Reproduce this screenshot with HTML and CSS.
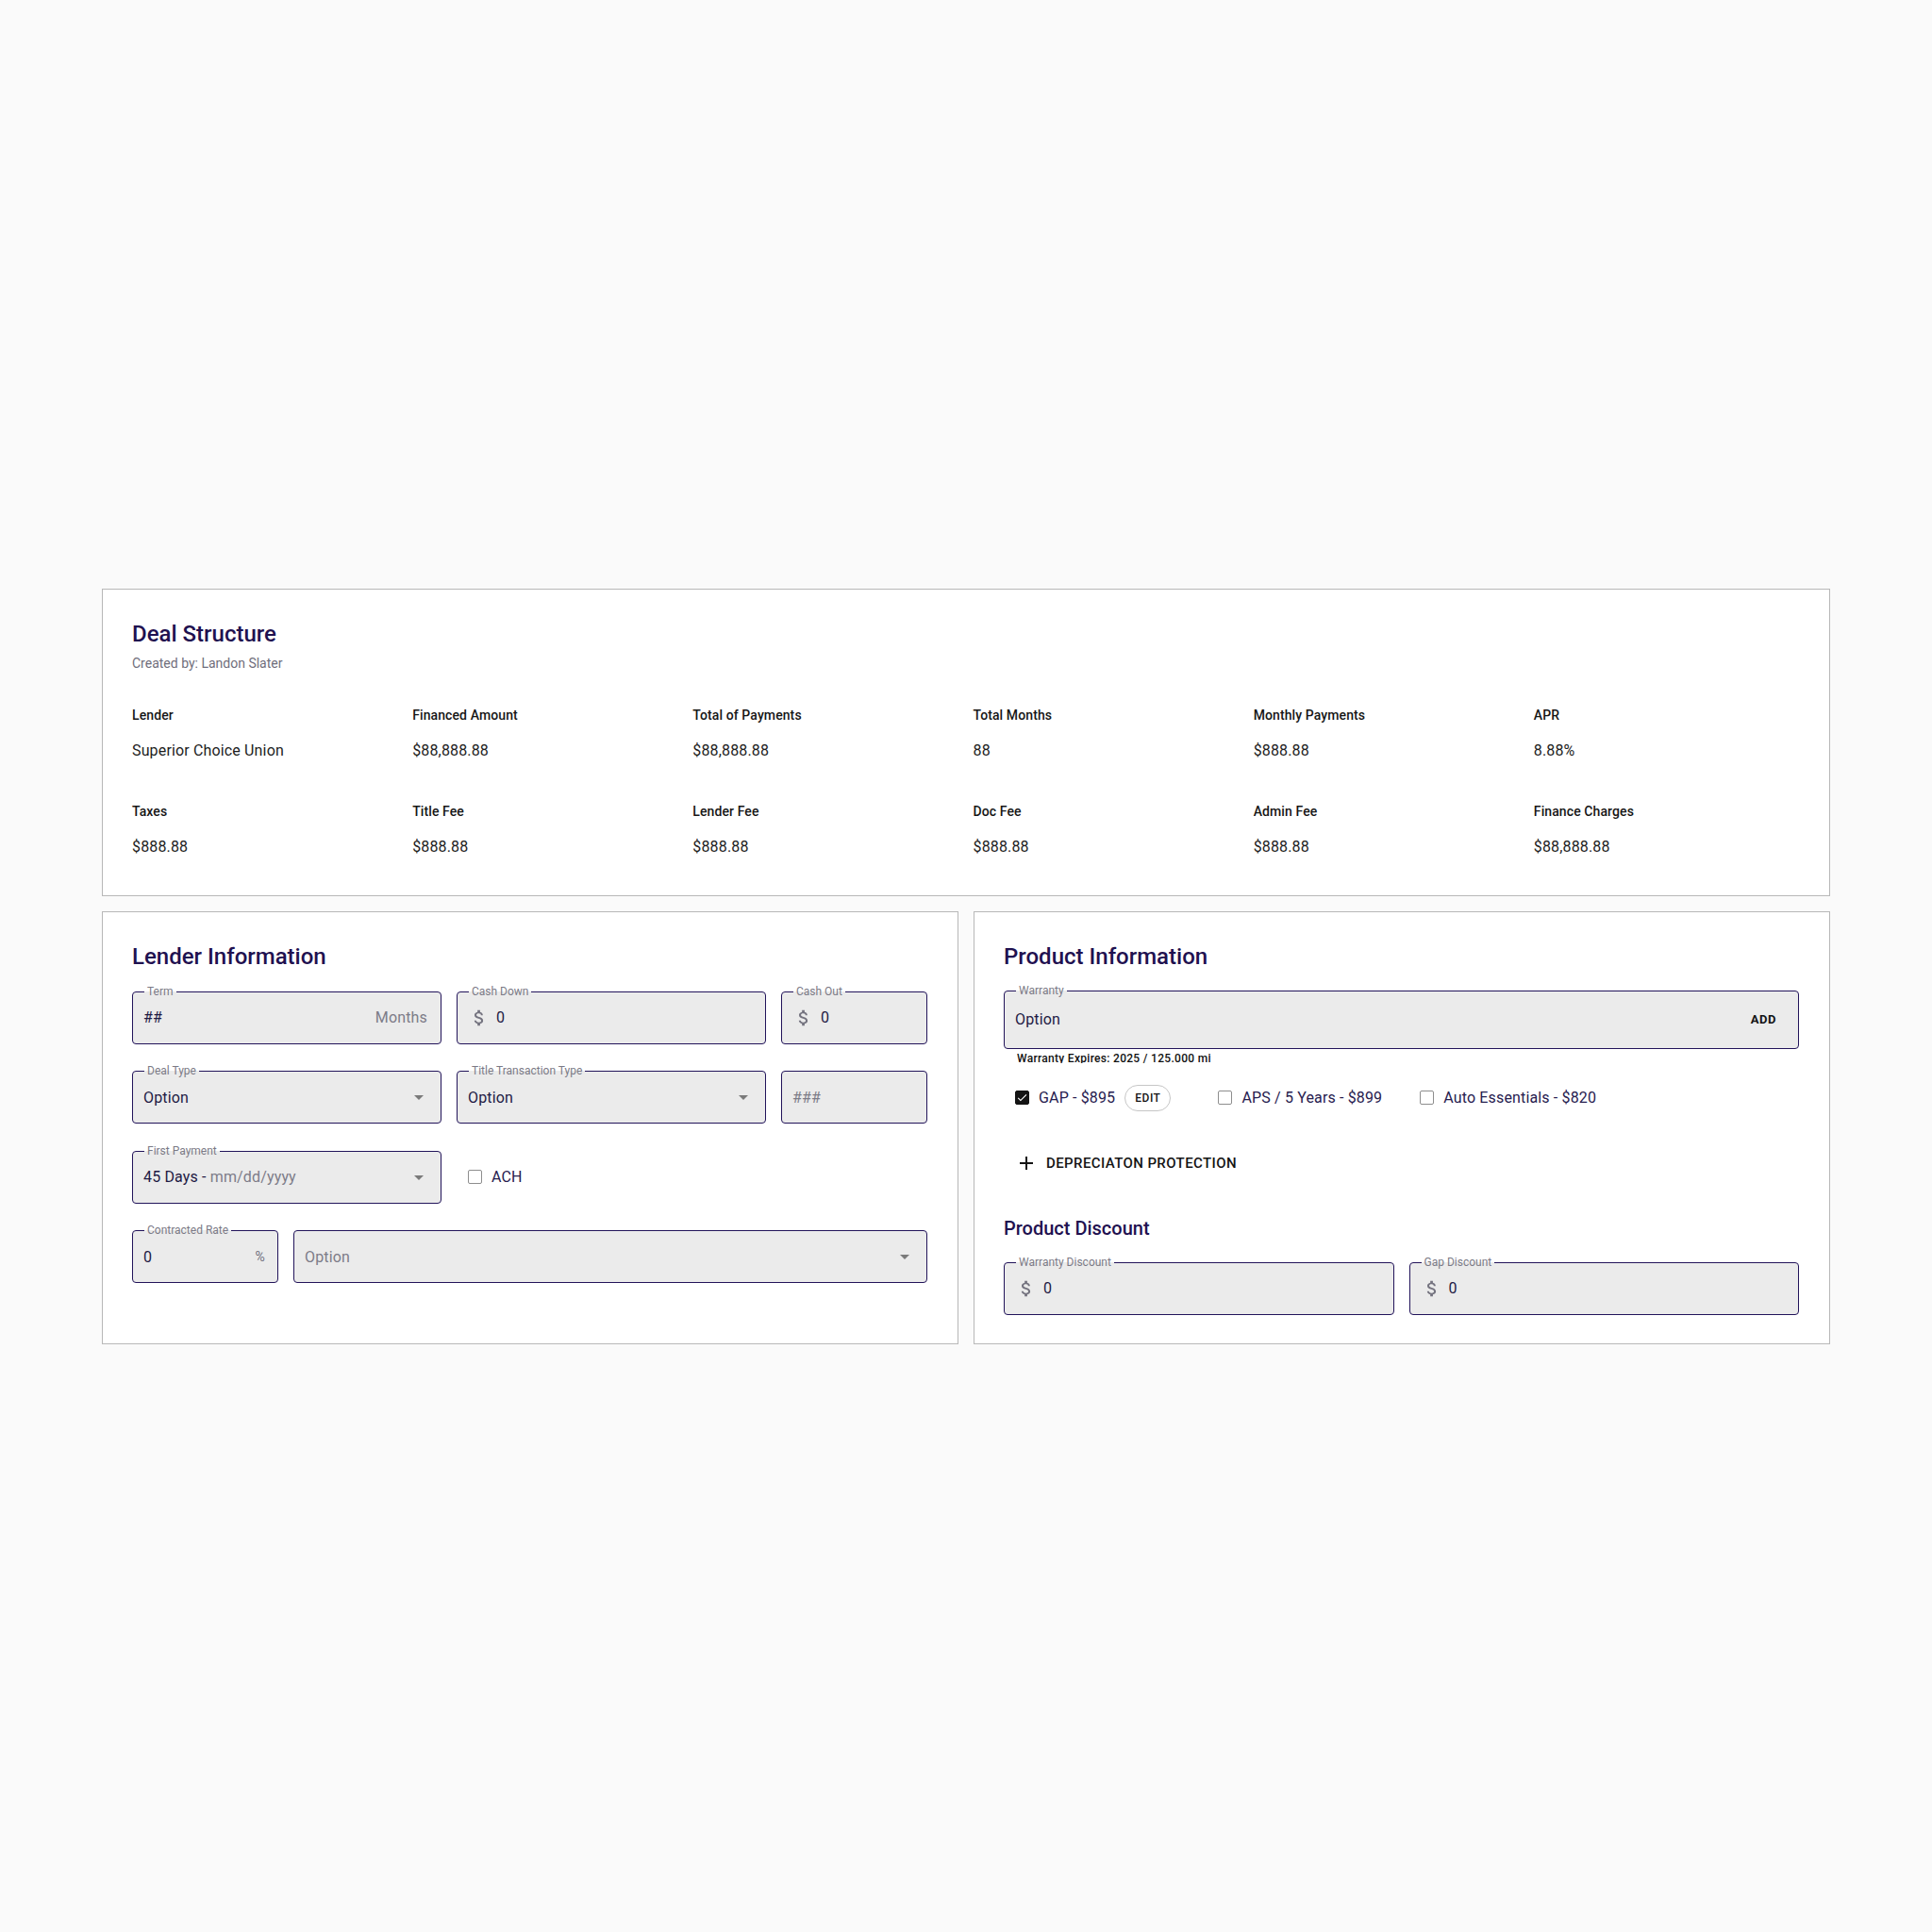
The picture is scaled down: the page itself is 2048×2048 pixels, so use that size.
FILE: index.html
```html
<!DOCTYPE html>
<html lang="en">
<head>
<meta charset="utf-8">
<title>Deal Structure</title>
<link rel="stylesheet" href="styles.css">
</head>
<body>
<main class="page">
  <section class="card deal">
    <h2 class="card-title">Deal Structure</h2>
    <p class="subtitle">Created by: Landon Slater</p>
    <dl class="summary">
      <div class="stat"><dt>Lender</dt><dd>Superior Choice Union</dd></div>
      <div class="stat"><dt>Financed Amount</dt><dd>$88,888.88</dd></div>
      <div class="stat"><dt>Total of Payments</dt><dd>$88,888.88</dd></div>
      <div class="stat"><dt>Total Months</dt><dd>88</dd></div>
      <div class="stat"><dt>Monthly Payments</dt><dd>$888.88</dd></div>
      <div class="stat"><dt>APR</dt><dd>8.88%</dd></div>
      <div class="stat"><dt>Taxes</dt><dd>$888.88</dd></div>
      <div class="stat"><dt>Title Fee</dt><dd>$888.88</dd></div>
      <div class="stat"><dt>Lender Fee</dt><dd>$888.88</dd></div>
      <div class="stat"><dt>Doc Fee</dt><dd>$888.88</dd></div>
      <div class="stat"><dt>Admin Fee</dt><dd>$888.88</dd></div>
      <div class="stat"><dt>Finance Charges</dt><dd>$88,888.88</dd></div>
    </dl>
  </section>

  <div class="cards-row">
    <section class="card lender">
      <h2 class="card-title">Lender Information</h2>
      <div class="form">
        <div class="grid-3">
          <div class="field">
            <span class="field-label">Term</span>
            <span class="value grow">##</span>
            <span class="suffix">Months</span>
          </div>
          <div class="field">
            <span class="field-label">Cash Down</span>
            <svg class="dollar" viewBox="0 0 24 24"><path d="M11.8 10.9c-2.27-.59-3-1.2-3-2.15 0-1.09 1.01-1.85 2.7-1.85 1.78 0 2.44.85 2.5 2.1h2.21c-.07-1.72-1.12-3.3-3.21-3.81V3h-3v2.16c-1.94.42-3.5 1.68-3.5 3.61 0 2.31 1.91 3.46 4.7 4.13 2.5.6 3 1.48 3 2.41 0 .69-.49 1.79-2.7 1.79-2.06 0-2.87-.92-2.98-2.1h-2.2c.12 2.19 1.76 3.42 3.68 3.83V21h3v-2.15c1.950-.37 3.5-1.5 3.5-3.55 0-2.84-2.43-3.81-4.7-4.4z"/></svg>
            <span class="value">0</span>
          </div>
          <div class="field">
            <span class="field-label">Cash Out</span>
            <svg class="dollar" viewBox="0 0 24 24"><path d="M11.8 10.9c-2.27-.59-3-1.2-3-2.15 0-1.09 1.01-1.85 2.7-1.85 1.78 0 2.44.85 2.5 2.1h2.21c-.07-1.72-1.12-3.3-3.21-3.81V3h-3v2.16c-1.94.42-3.5 1.68-3.5 3.61 0 2.31 1.91 3.46 4.7 4.13 2.5.6 3 1.48 3 2.41 0 .69-.49 1.79-2.7 1.79-2.06 0-2.87-.92-2.98-2.1h-2.2c.12 2.19 1.76 3.42 3.68 3.83V21h3v-2.15c1.95-.37 3.5-1.5 3.5-3.55 0-2.84-2.43-3.81-4.7-4.4z"/></svg>
            <span class="value">0</span>
          </div>

          <div class="field select">
            <span class="field-label">Deal Type</span>
            <span class="value grow">Option</span>
            <svg class="caret" viewBox="0 0 24 24"><path d="M7 10l5 5 5-5z"/></svg>
          </div>
          <div class="field select">
            <span class="field-label">Title Transaction Type</span>
            <span class="value grow">Option</span>
            <svg class="caret" viewBox="0 0 24 24"><path d="M7 10l5 5 5-5z"/></svg>
          </div>
          <div class="field">
            <span class="placeholder">###</span>
          </div>

          <div class="field select">
            <span class="field-label">First Payment</span>
            <span class="value grow">45 Days - <span class="muted">mm/dd/yyyy</span></span>
            <svg class="caret" viewBox="0 0 24 24"><path d="M7 10l5 5 5-5z"/></svg>
          </div>
          <label class="check ach">
            <span class="box"></span>
            <span class="check-text">ACH</span>
          </label>
        </div>

        <div class="grid-rate">
          <div class="field rate">
            <span class="field-label">Contracted Rate</span>
            <span class="value grow">0</span>
            <span class="pct">%</span>
          </div>
          <div class="field select">
            <span class="placeholder grow">Option</span>
            <svg class="caret" viewBox="0 0 24 24"><path d="M7 10l5 5 5-5z"/></svg>
          </div>
        </div>
      </div>
    </section>

    <section class="card product">
      <h2 class="card-title">Product Information</h2>
      <div class="field warranty">
        <span class="field-label">Warranty</span>
        <span class="value grow">Option</span>
        <span class="add">ADD</span>
      </div>
      <p class="helper">Warranty Expires: 2025 / 125.000 mi</p>

      <div class="products">
        <div class="product-item">
          <span class="box checked"><svg viewBox="0 0 24 24"><path d="M9 16.2 4.8 12l-1.4 1.4L9 19 21 7l-1.4-1.4L9 16.2z"/></svg></span>
          <span class="check-text">GAP - $895</span>
          <span class="chip">EDIT</span>
        </div>
        <div class="product-item">
          <span class="box"></span>
          <span class="check-text">APS / 5 Years - $899</span>
        </div>
        <div class="product-item">
          <span class="box"></span>
          <span class="check-text">Auto Essentials - $820</span>
        </div>
      </div>

      <div class="add-product">
        <svg class="plus" viewBox="0 0 24 24"><path d="M19 13h-6v6h-2v-6H5v-2h6V5h2v6h6v2z"/></svg>
        <span>DEPRECIATON PROTECTION</span>
      </div>

      <h3 class="sub-title">Product Discount</h3>
      <div class="grid-2">
        <div class="field">
          <span class="field-label">Warranty Discount</span>
          <svg class="dollar" viewBox="0 0 24 24"><path d="M11.8 10.9c-2.27-.59-3-1.2-3-2.15 0-1.09 1.01-1.85 2.7-1.85 1.78 0 2.44.85 2.5 2.1h2.21c-.07-1.72-1.12-3.3-3.21-3.81V3h-3v2.16c-1.94.42-3.5 1.68-3.5 3.61 0 2.31 1.91 3.46 4.7 4.13 2.5.6 3 1.48 3 2.41 0 .69-.49 1.79-2.7 1.79-2.06 0-2.87-.92-2.98-2.1h-2.2c.12 2.19 1.76 3.42 3.68 3.83V21h3v-2.15c1.95-.37 3.5-1.5 3.5-3.55 0-2.84-2.43-3.81-4.7-4.4z"/></svg>
          <span class="value">0</span>
        </div>
        <div class="field">
          <span class="field-label">Gap Discount</span>
          <svg class="dollar" viewBox="0 0 24 24"><path d="M11.8 10.9c-2.27-.59-3-1.2-3-2.15 0-1.09 1.01-1.85 2.7-1.85 1.78 0 2.44.85 2.5 2.1h2.21c-.07-1.72-1.12-3.3-3.21-3.81V3h-3v2.16c-1.94.42-3.5 1.68-3.5 3.61 0 2.31 1.91 3.46 4.7 4.13 2.5.6 3 1.48 3 2.41 0 .69-.49 1.79-2.7 1.79-2.06 0-2.87-.92-2.98-2.1h-2.2c.12 2.19 1.76 3.42 3.68 3.83V21h3v-2.15c1.95-.37 3.5-1.5 3.5-3.55 0-2.84-2.43-3.81-4.7-4.4z"/></svg>
          <span class="value">0</span>
        </div>
      </div>
    </section>
  </div>
</main>
</body>
</html>
```

FILE: styles.css
```css
* { box-sizing: border-box; }

body {
  margin: 0;
  background: #fafafa;
  font-family: Roboto, "Noto Sans", sans-serif;
  color: #1b1b1b;
}

.page {
  min-height: 100vh;
  display: flex;
  flex-direction: column;
  justify-content: center;
  gap: 16px;
  padding: 0 108px;
}

.card {
  background: #ffffff;
  border: 1px solid #b8b8b8;
  padding: 31px 32px 32px 31px;
}

.card-title {
  margin: 0;
  font-size: 24px;
  line-height: 32px;
  font-weight: 500;
  color: #1f1150;
}

.subtitle {
  margin: 5px 0 0;
  font-size: 14px;
  line-height: 20px;
  color: #6f6e7b;
}

.summary {
  display: grid;
  grid-template-columns: repeat(6, 1fr);
  gap: 42px 16px;
  margin: 35px 0 7px;
}

.stat dt {
  font-size: 14px;
  line-height: 20px;
  font-weight: 500;
  letter-spacing: 0.1px;
  color: #161616;
}

.stat dd {
  margin: 16px 0 0;
  font-size: 16px;
  line-height: 24px;
  letter-spacing: 0.15px;
  color: #1d1d1d;
}

.cards-row {
  display: grid;
  grid-template-columns: 1fr 1fr;
  gap: 16px;
}

.lender .card-title {
  margin-bottom: 21px;
}

.product .card-title {
  margin-bottom: 20px;
}

.product {
  padding-bottom: 30px;
}

.form {
  display: flex;
  flex-direction: column;
  gap: 28.5px;
}

.grid-3 {
  display: grid;
  grid-template-columns: 1fr 1fr 155px;
  gap: 28.5px 16px;
}

.grid-rate {
  display: grid;
  grid-template-columns: 155px 1fr;
  gap: 16px;
}

.grid-2 {
  display: grid;
  grid-template-columns: 1fr 1fr;
  gap: 16px;
}

.field {
  position: relative;
  height: 56px;
  display: flex;
  align-items: center;
  padding: 0 14px 0 11px;
  background: #ebebeb;
  border: 1px solid #22145a;
  border-radius: 4px;
  font-size: 16px;
  letter-spacing: 0.15px;
  color: #1e1a44;
}

.field.select {
  padding-right: 11px;
}

.field-label {
  position: absolute;
  top: -8px;
  left: 12px;
  padding: 0 3px;
  font-size: 12px;
  line-height: 14px;
  letter-spacing: 0;
  color: #7b7a86;
  background: linear-gradient(to bottom, #ffffff 7px, #ebebeb 7px);
  white-space: nowrap;
}

.value {
  white-space: nowrap;
}

.grow {
  flex: 1;
}

.muted,
.placeholder,
.suffix {
  color: #7d7c88;
}

.pct {
  font-size: 14px;
  color: #6f6e7b;
  margin-right: -1px;
}

.dollar {
  width: 22px;
  height: 22px;
  fill: #74737f;
  margin-left: 1px;
  margin-right: 7px;
  flex: none;
}

.caret {
  width: 24px;
  height: 24px;
  fill: #7a7a7a;
  flex: none;
}

.check {
  display: flex;
  align-items: center;
  padding-left: 12px;
}

.box {
  width: 15px;
  height: 15px;
  border: 1.5px solid #8e8e8e;
  border-radius: 2px;
  flex: none;
  display: flex;
  align-items: center;
  justify-content: center;
}

.box.checked {
  background: #141414;
  border-color: #141414;
}

.box.checked svg {
  width: 13px;
  height: 13px;
  fill: #ffffff;
}

.check-text {
  margin-left: 10px;
  font-size: 16px;
  letter-spacing: 0.15px;
  color: #27204f;
  white-space: nowrap;
}

.warranty {
  height: 62px;
}

.add {
  font-size: 13px;
  font-weight: 700;
  letter-spacing: 0.5px;
  color: #141414;
  margin-right: 9px;
}

.helper {
  margin: 2px 0 0 14px;
  height: 13px;
  overflow: hidden;
  font-size: 12px;
  line-height: 16px;
  font-weight: 500;
  letter-spacing: 0.3px;
  color: #111111;
}

.products {
  display: flex;
  align-items: center;
  height: 32px;
  margin-top: 21px;
  padding-left: 12px;
  gap: 40px;
}

.product-item {
  display: flex;
  align-items: center;
}

.chip {
  margin-left: 10px;
  margin-right: 10px;
  height: 28px;
  padding: 0 10px;
  display: flex;
  align-items: center;
  border: 1px solid #c6c6c6;
  border-radius: 14px;
  font-size: 12px;
  font-weight: 500;
  letter-spacing: 0.5px;
  color: #151515;
}

.add-product {
  display: flex;
  align-items: center;
  height: 36px;
  margin-top: 35px;
  padding-left: 12px;
  font-size: 15px;
  font-weight: 500;
  letter-spacing: 0.4px;
  color: #141414;
}

.plus {
  width: 24px;
  height: 24px;
  fill: #141414;
  margin-right: 9px;
  flex: none;
}

.sub-title {
  margin: 37px 0 22px;
  font-size: 20px;
  line-height: 28px;
  font-weight: 500;
  color: #1f1150;
}
```
